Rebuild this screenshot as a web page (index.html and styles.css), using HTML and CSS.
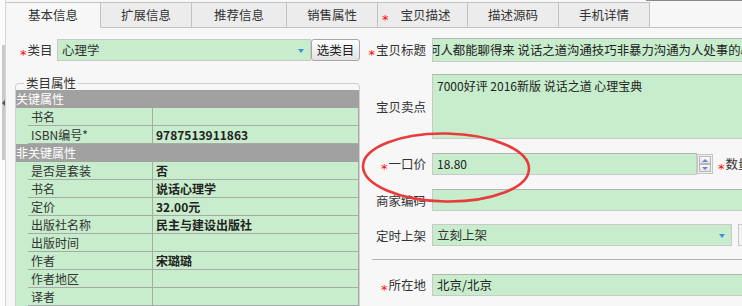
FILE: index.html
```html
<!DOCTYPE html>
<html lang="zh-CN">
<head>
<meta charset="UTF-8" />
<title>宝贝编辑 - 基本信息</title>
<link rel="stylesheet" href="styles.css">
</head>
<body>

<div class="page">

  <!-- left collapse handle -->
  <div class="gutter">
    <div class="handle"><span class="handle-arrow"></span></div>
  </div>

  <div class="main">
    <div class="top-strip"><span></span></div>

    <div class="tabs">
      <div class="tab tab-lg active">基本信息</div>
      <div class="tab">扩展信息</div>
      <div class="tab tab-lg">推荐信息</div>
      <div class="tab">销售属性</div>
      <div class="tab tab-req"><span class="req">*</span>宝贝描述</div>
      <div class="tab">描述源码</div>
      <div class="tab">手机详情</div>
      <div class="tab-fill"></div>
    </div>

    <div class="content">

      <!-- category + attributes -->
      <div class="left-col">
        <div class="cat-row">
          <div class="cat-label"><span class="req">*</span>类目</div>
          <div class="select cat-select">心理学<span class="caret"></span></div>
          <div class="btn">选类目</div>
        </div>

        <fieldset class="props">
          <legend>类目属性</legend>
          <table>
            <colgroup>
              <col class="col-indent">
              <col class="col-name">
              <col>
            </colgroup>
            <tr class="group"><td colspan="3">关键属性</td></tr>
            <tr><td></td><td class="name">书名</td><td class="value"></td></tr>
            <tr><td></td><td class="name">ISBN编号*</td><td class="value">9787513911863</td></tr>
            <tr class="group"><td colspan="3">非关键属性</td></tr>
            <tr><td></td><td class="name">是否是套装</td><td class="value">否</td></tr>
            <tr><td></td><td class="name">书名</td><td class="value">说话心理学</td></tr>
            <tr><td></td><td class="name">定价</td><td class="value">32.00元</td></tr>
            <tr><td></td><td class="name">出版社名称</td><td class="value">民主与建设出版社</td></tr>
            <tr><td></td><td class="name">出版时间</td><td class="value"></td></tr>
            <tr><td></td><td class="name">作者</td><td class="value">宋璐璐</td></tr>
            <tr><td></td><td class="name">作者地区</td><td class="value"></td></tr>
            <tr><td></td><td class="name">译者</td><td class="value"></td></tr>
          </table>
        </fieldset>
      </div>

      <!-- item fields -->
      <div class="right-col">
        <div class="field f-title">
          <div class="label"><span class="req">*</span>宝贝标题</div>
          <div class="input"><span class="scrolled">何人都能聊得来 说话之道沟通技巧非暴力沟通为人处事的心理学</span></div>
        </div>

        <div class="field f-selling">
          <div class="label">宝贝卖点</div>
          <div class="input textarea">7000好评 2016新版 说话之道 心理宝典</div>
        </div>

        <div class="field f-price">
          <div class="label"><span class="req">*</span>一口价</div>
          <div class="input price">18.80</div>
          <div class="spinner">
            <div class="spin-btn"><span class="spin-up"></span></div>
            <div class="spin-btn"><span class="spin-down"></span></div>
          </div>
          <div class="label-inline"><span class="req">*</span>数量</div>
        </div>

        <div class="field f-code">
          <div class="label">商家编码</div>
          <div class="input"></div>
        </div>

        <div class="field f-shelf">
          <div class="label">定时上架</div>
          <div class="select shelf-select">立刻上架<span class="caret"></span></div>
          <div class="extra-box"></div>
        </div>

        <div class="divider"></div>

        <div class="field f-location">
          <div class="label"><span class="req">*</span>所在地</div>
          <div class="input">北京/北京</div>
        </div>
      </div>

    </div>
  </div>

  <!-- hand drawn highlight -->
  <svg class="mark" width="742" height="306" viewBox="0 0 742 306">
    <ellipse cx="446" cy="167.5" rx="83" ry="34" fill="none" stroke="#e83b3b" stroke-width="2.6" transform="rotate(1 446 167)" />
  </svg>

</div>

</body>
</html>
```

FILE: styles.css
```css
* {
  box-sizing: border-box;
}
html, body {
  margin: 0;
  padding: 0;
}
body {
  font-family: "Noto Sans CJK SC", "Noto Sans", sans-serif;
  font-size: 12.5px;
  color: #333;
  background: #f7f7f7;
  width: 742px;
  height: 306px;
  overflow: hidden;
}
.page {
  position: relative;
  display: flex;
  height: 306px;
  overflow: hidden;
}
.gutter {
  width: 6px;
  flex: none;
  background: #fbfbfb;
  border-right: 1px solid #d6d6d6;
}
.handle {
  margin: 45px 0 0 2px;
  width: 3px;
  height: 115px;
  background: #c9c9c9;
  padding-top: 55px;
}
.handle-arrow {
  display: block;
  width: 0;
  height: 0;
  border-top: 3px solid transparent;
  border-bottom: 3px solid transparent;
  border-right: 3px solid #555;
}
.main {
  flex: 1;
  min-width: 0;
  display: flex;
  flex-direction: column;
}
.top-strip {
  height: 2px;
  display: flex;
  justify-content: flex-end;
}
.top-strip span {
  width: 96px;
  border-top: 1px solid #8a8a8a;
}
.req {
  color: #f00;
  font-family: "DejaVu Sans", sans-serif;
  font-size: 13px;
  line-height: 10px;
  vertical-align: -4px;
  margin-right: 1px;
}

/* tabs */
.tabs {
  display: flex;
  height: 26px;
}
.tab {
  width: 91px;
  flex: none;
  border: 1px solid #c2c2c2;
  border-left: none;
  background: #ececec;
  text-align: center;
  line-height: 24px;
}
.tab-lg {
  width: 95px;
}
.tab.active {
  background: #f7f7f7;
  border-bottom-color: #f7f7f7;
}
.tab-req {
  width: 90px;
  text-align: left;
  padding-left: 4px;
}
.tab-req .req {
  margin-right: 12px;
}
.tab-fill {
  flex: 1;
  border-bottom: 1px solid #c2c2c2;
}

.content {
  display: flex;
  overflow: hidden;
}
.left-col {
  width: 359px;
  flex: none;
}
.right-col {
  width: 420px;
  flex: none;
}

/* category row */
.cat-row {
  display: flex;
  margin-top: 11px;
  padding-left: 14px;
  height: 22px;
}
.cat-label {
  width: 37px;
  line-height: 22px;
}
.select {
  position: relative;
  height: 22px;
  background: #c7edcc;
  border: 1px solid #c9c9c9;
  padding-left: 4px;
  line-height: 20px;
}
.cat-select {
  width: 254px;
}
.caret {
  position: absolute;
  right: 6px;
  top: 9px;
  width: 0;
  height: 0;
  border-left: 3.5px solid transparent;
  border-right: 3.5px solid transparent;
  border-top: 4px solid #3b90e0;
}
.btn {
  width: 49px;
  height: 22px;
  border: 1px solid #a6a6a6;
  border-radius: 3px;
  background: linear-gradient(#ffffff, #e2e2e2);
  text-align: center;
  line-height: 20px;
  color: #222;
}

/* attribute box */
.props {
  margin: 15px 0 0 9px;
  padding: 0;
  width: 345px;
  min-width: 0;
  border: 1px solid #cfcfcf;
  border-radius: 4px 4px 0 0;
}
.props legend {
  margin-left: 8px;
  padding: 0 2px;
  line-height: 14px;
}
.props table {
  width: 100%;
  table-layout: fixed;
  border-collapse: separate;
  border-spacing: 0;
  font-size: 12px;
}
.col-indent {
  width: 12px;
}
.col-name {
  width: 125px;
}
.props td {
  padding: 0 0 0 3px;
  height: 18px;
  background: #c7edcc;
  white-space: nowrap;
  overflow: hidden;
}
.props tr td:first-child {
  padding: 0;
}
.props .group td {
  background: #a1a1a1;
  color: #fff;
  padding-left: 3px;
  line-height: 18px;
}
.props .name {
  border-bottom: 1px solid #a9a9a9;
  border-right: 1px solid #a9a9a9;
  line-height: 17px;
}
.props .value {
  border-bottom: 1px solid #a9a9a9;
  border-right: 1px solid #a9a9a9;
  line-height: 17px;
  font-weight: bold;
  color: #222;
}

/* right fields */
.field {
  display: flex;
  align-items: center;
}
.label {
  width: 61px;
  margin-right: 6px;
  text-align: right;
  flex: none;
}
.input {
  width: 330px;
  height: 22px;
  background: #c7edcc;
  border: 1px solid #c9c9c9;
  border-top-color: #b4b4b4;
  padding: 0 4px;
  line-height: 20px;
  white-space: nowrap;
  overflow: hidden;
  color: #222;
}
.f-title {
  margin-top: 10px;
}
.f-title .input {
  height: 24px;
  line-height: 22px;
  padding-left: 1px;
  font-size: 12.4px;
}
.scrolled {
  margin-left: -6px;
}
.f-selling {
  margin-top: 12px;
}
.textarea {
  height: 65px;
  line-height: 16px;
  padding: 3px 4px;
  font-size: 12px;
}
.f-price {
  margin-top: 14px;
}
.price {
  width: 265px;
  font-size: 12px;
}
.spinner {
  width: 16px;
  height: 20px;
  border: 1px solid #c4c4c4;
  background: #f2f2f2;
  padding: 1px;
}
.spin-btn {
  height: 8px;
  border: 1px solid #b7b7b7;
  background: linear-gradient(#fbfbfb, #e1e1e1);
  display: flex;
  justify-content: center;
  align-items: center;
}
.spin-up, .spin-down {
  width: 0;
  height: 0;
  border-left: 3px solid transparent;
  border-right: 3px solid transparent;
}
.spin-up {
  border-bottom: 3px solid #6a85cc;
}
.spin-down {
  border-top: 3px solid #6a85cc;
}
.label-inline {
  margin-left: 5px;
  white-space: nowrap;
}
.f-code {
  margin-top: 14px;
}
.f-shelf {
  margin-top: 13px;
}
.shelf-select {
  width: 300px;
}
.extra-box {
  margin-left: 6px;
  width: 40px;
  height: 22px;
  border: 1px solid #c9c9c9;
  background: #f2f2f2;
}
.divider {
  margin: 13px 0 0 7px;
  border-top: 1px solid #b4b4b4;
}
.f-location {
  margin-top: 14px;
}

.mark {
  position: absolute;
  left: 0;
  top: 0;
  pointer-events: none;
}
```
